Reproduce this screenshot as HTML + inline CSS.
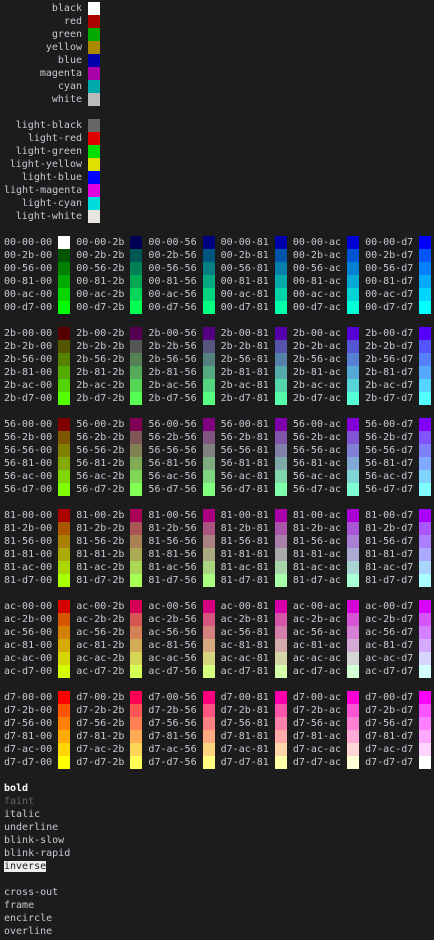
<!DOCTYPE html>
<html><head><meta charset="utf-8"><style>
html,body{margin:0;padding:0;background:#1c1c1c;}
body{width:434px;height:940px;overflow:hidden;padding:2px 0 0 4px;box-sizing:border-box;font-family:"DejaVu Sans Mono","Liberation Mono",monospace;font-size:10px;color:#c8c8d4;}
div{height:13px;line-height:13px;white-space:pre;}
i{display:inline-block;width:12px;height:13px;vertical-align:top;}
.n{display:inline-block;width:78px;text-align:right;}
</style></head><body>
<div><span class="n">black</span> <i style="background:#fff"></i></div>
<div><span class="n">red</span> <i style="background:#aa0000"></i></div>
<div><span class="n">green</span> <i style="background:#00aa00"></i></div>
<div><span class="n">yellow</span> <i style="background:#aa8800"></i></div>
<div><span class="n">blue</span> <i style="background:#0000aa"></i></div>
<div><span class="n">magenta</span> <i style="background:#aa00aa"></i></div>
<div><span class="n">cyan</span> <i style="background:#00aaaa"></i></div>
<div><span class="n">white</span> <i style="background:#bbbbbb"></i></div>
<div></div>
<div><span class="n">light-black</span> <i style="background:#666666"></i></div>
<div><span class="n">light-red</span> <i style="background:#e00000"></i></div>
<div><span class="n">light-green</span> <i style="background:#00dd00"></i></div>
<div><span class="n">light-yellow</span> <i style="background:#e0e000"></i></div>
<div><span class="n">light-blue</span> <i style="background:#0000ff"></i></div>
<div><span class="n">light-magenta</span> <i style="background:#e000e0"></i></div>
<div><span class="n">light-cyan</span> <i style="background:#00dddd"></i></div>
<div><span class="n">light-white</span> <i style="background:#e8e4e0"></i></div>
<div></div>
<div>00-00-00 <i style="background:#ffffff"></i> 00-00-2b <i style="background:#000055"></i> 00-00-56 <i style="background:#000080"></i> 00-00-81 <i style="background:#0000aa"></i> 00-00-ac <i style="background:#0000d5"></i> 00-00-d7 <i style="background:#0000ff"></i></div>
<div>00-2b-00 <i style="background:#005500"></i> 00-2b-2b <i style="background:#005555"></i> 00-2b-56 <i style="background:#005580"></i> 00-2b-81 <i style="background:#0055aa"></i> 00-2b-ac <i style="background:#0055d5"></i> 00-2b-d7 <i style="background:#0055ff"></i></div>
<div>00-56-00 <i style="background:#008000"></i> 00-56-2b <i style="background:#008055"></i> 00-56-56 <i style="background:#008080"></i> 00-56-81 <i style="background:#0080aa"></i> 00-56-ac <i style="background:#0080d5"></i> 00-56-d7 <i style="background:#0080ff"></i></div>
<div>00-81-00 <i style="background:#00aa00"></i> 00-81-2b <i style="background:#00aa55"></i> 00-81-56 <i style="background:#00aa80"></i> 00-81-81 <i style="background:#00aaaa"></i> 00-81-ac <i style="background:#00aad5"></i> 00-81-d7 <i style="background:#00aaff"></i></div>
<div>00-ac-00 <i style="background:#00d500"></i> 00-ac-2b <i style="background:#00d555"></i> 00-ac-56 <i style="background:#00d580"></i> 00-ac-81 <i style="background:#00d5aa"></i> 00-ac-ac <i style="background:#00d5d5"></i> 00-ac-d7 <i style="background:#00d5ff"></i></div>
<div>00-d7-00 <i style="background:#00ff00"></i> 00-d7-2b <i style="background:#00ff55"></i> 00-d7-56 <i style="background:#00ff80"></i> 00-d7-81 <i style="background:#00ffaa"></i> 00-d7-ac <i style="background:#00ffd5"></i> 00-d7-d7 <i style="background:#00ffff"></i></div>
<div></div>
<div>2b-00-00 <i style="background:#550000"></i> 2b-00-2b <i style="background:#550055"></i> 2b-00-56 <i style="background:#550080"></i> 2b-00-81 <i style="background:#5500aa"></i> 2b-00-ac <i style="background:#5500d5"></i> 2b-00-d7 <i style="background:#5500ff"></i></div>
<div>2b-2b-00 <i style="background:#555500"></i> 2b-2b-2b <i style="background:#555555"></i> 2b-2b-56 <i style="background:#555580"></i> 2b-2b-81 <i style="background:#5555aa"></i> 2b-2b-ac <i style="background:#5555d5"></i> 2b-2b-d7 <i style="background:#5555ff"></i></div>
<div>2b-56-00 <i style="background:#558000"></i> 2b-56-2b <i style="background:#558055"></i> 2b-56-56 <i style="background:#558080"></i> 2b-56-81 <i style="background:#5580aa"></i> 2b-56-ac <i style="background:#5580d5"></i> 2b-56-d7 <i style="background:#5580ff"></i></div>
<div>2b-81-00 <i style="background:#55aa00"></i> 2b-81-2b <i style="background:#55aa55"></i> 2b-81-56 <i style="background:#55aa80"></i> 2b-81-81 <i style="background:#55aaaa"></i> 2b-81-ac <i style="background:#55aad5"></i> 2b-81-d7 <i style="background:#55aaff"></i></div>
<div>2b-ac-00 <i style="background:#55d500"></i> 2b-ac-2b <i style="background:#55d555"></i> 2b-ac-56 <i style="background:#55d580"></i> 2b-ac-81 <i style="background:#55d5aa"></i> 2b-ac-ac <i style="background:#55d5d5"></i> 2b-ac-d7 <i style="background:#55d5ff"></i></div>
<div>2b-d7-00 <i style="background:#55ff00"></i> 2b-d7-2b <i style="background:#55ff55"></i> 2b-d7-56 <i style="background:#55ff80"></i> 2b-d7-81 <i style="background:#55ffaa"></i> 2b-d7-ac <i style="background:#55ffd5"></i> 2b-d7-d7 <i style="background:#55ffff"></i></div>
<div></div>
<div>56-00-00 <i style="background:#800000"></i> 56-00-2b <i style="background:#800055"></i> 56-00-56 <i style="background:#800080"></i> 56-00-81 <i style="background:#8000aa"></i> 56-00-ac <i style="background:#8000d5"></i> 56-00-d7 <i style="background:#8000ff"></i></div>
<div>56-2b-00 <i style="background:#805500"></i> 56-2b-2b <i style="background:#805555"></i> 56-2b-56 <i style="background:#805580"></i> 56-2b-81 <i style="background:#8055aa"></i> 56-2b-ac <i style="background:#8055d5"></i> 56-2b-d7 <i style="background:#8055ff"></i></div>
<div>56-56-00 <i style="background:#808000"></i> 56-56-2b <i style="background:#808055"></i> 56-56-56 <i style="background:#808080"></i> 56-56-81 <i style="background:#8080aa"></i> 56-56-ac <i style="background:#8080d5"></i> 56-56-d7 <i style="background:#8080ff"></i></div>
<div>56-81-00 <i style="background:#80aa00"></i> 56-81-2b <i style="background:#80aa55"></i> 56-81-56 <i style="background:#80aa80"></i> 56-81-81 <i style="background:#80aaaa"></i> 56-81-ac <i style="background:#80aad5"></i> 56-81-d7 <i style="background:#80aaff"></i></div>
<div>56-ac-00 <i style="background:#80d500"></i> 56-ac-2b <i style="background:#80d555"></i> 56-ac-56 <i style="background:#80d580"></i> 56-ac-81 <i style="background:#80d5aa"></i> 56-ac-ac <i style="background:#80d5d5"></i> 56-ac-d7 <i style="background:#80d5ff"></i></div>
<div>56-d7-00 <i style="background:#80ff00"></i> 56-d7-2b <i style="background:#80ff55"></i> 56-d7-56 <i style="background:#80ff80"></i> 56-d7-81 <i style="background:#80ffaa"></i> 56-d7-ac <i style="background:#80ffd5"></i> 56-d7-d7 <i style="background:#80ffff"></i></div>
<div></div>
<div>81-00-00 <i style="background:#aa0000"></i> 81-00-2b <i style="background:#aa0055"></i> 81-00-56 <i style="background:#aa0080"></i> 81-00-81 <i style="background:#aa00aa"></i> 81-00-ac <i style="background:#aa00d5"></i> 81-00-d7 <i style="background:#aa00ff"></i></div>
<div>81-2b-00 <i style="background:#aa5500"></i> 81-2b-2b <i style="background:#aa5555"></i> 81-2b-56 <i style="background:#aa5580"></i> 81-2b-81 <i style="background:#aa55aa"></i> 81-2b-ac <i style="background:#aa55d5"></i> 81-2b-d7 <i style="background:#aa55ff"></i></div>
<div>81-56-00 <i style="background:#aa8000"></i> 81-56-2b <i style="background:#aa8055"></i> 81-56-56 <i style="background:#aa8080"></i> 81-56-81 <i style="background:#aa80aa"></i> 81-56-ac <i style="background:#aa80d5"></i> 81-56-d7 <i style="background:#aa80ff"></i></div>
<div>81-81-00 <i style="background:#aaaa00"></i> 81-81-2b <i style="background:#aaaa55"></i> 81-81-56 <i style="background:#aaaa80"></i> 81-81-81 <i style="background:#aaaaaa"></i> 81-81-ac <i style="background:#aaaad5"></i> 81-81-d7 <i style="background:#aaaaff"></i></div>
<div>81-ac-00 <i style="background:#aad500"></i> 81-ac-2b <i style="background:#aad555"></i> 81-ac-56 <i style="background:#aad580"></i> 81-ac-81 <i style="background:#aad5aa"></i> 81-ac-ac <i style="background:#aad5d5"></i> 81-ac-d7 <i style="background:#aad5ff"></i></div>
<div>81-d7-00 <i style="background:#aaff00"></i> 81-d7-2b <i style="background:#aaff55"></i> 81-d7-56 <i style="background:#aaff80"></i> 81-d7-81 <i style="background:#aaffaa"></i> 81-d7-ac <i style="background:#aaffd5"></i> 81-d7-d7 <i style="background:#aaffff"></i></div>
<div></div>
<div>ac-00-00 <i style="background:#d50000"></i> ac-00-2b <i style="background:#d50055"></i> ac-00-56 <i style="background:#d50080"></i> ac-00-81 <i style="background:#d500aa"></i> ac-00-ac <i style="background:#d500d5"></i> ac-00-d7 <i style="background:#d500ff"></i></div>
<div>ac-2b-00 <i style="background:#d55500"></i> ac-2b-2b <i style="background:#d55555"></i> ac-2b-56 <i style="background:#d55580"></i> ac-2b-81 <i style="background:#d555aa"></i> ac-2b-ac <i style="background:#d555d5"></i> ac-2b-d7 <i style="background:#d555ff"></i></div>
<div>ac-56-00 <i style="background:#d58000"></i> ac-56-2b <i style="background:#d58055"></i> ac-56-56 <i style="background:#d58080"></i> ac-56-81 <i style="background:#d580aa"></i> ac-56-ac <i style="background:#d580d5"></i> ac-56-d7 <i style="background:#d580ff"></i></div>
<div>ac-81-00 <i style="background:#d5aa00"></i> ac-81-2b <i style="background:#d5aa55"></i> ac-81-56 <i style="background:#d5aa80"></i> ac-81-81 <i style="background:#d5aaaa"></i> ac-81-ac <i style="background:#d5aad5"></i> ac-81-d7 <i style="background:#d5aaff"></i></div>
<div>ac-ac-00 <i style="background:#d5d500"></i> ac-ac-2b <i style="background:#d5d555"></i> ac-ac-56 <i style="background:#d5d580"></i> ac-ac-81 <i style="background:#d5d5aa"></i> ac-ac-ac <i style="background:#d5d5d5"></i> ac-ac-d7 <i style="background:#d5d5ff"></i></div>
<div>ac-d7-00 <i style="background:#d5ff00"></i> ac-d7-2b <i style="background:#d5ff55"></i> ac-d7-56 <i style="background:#d5ff80"></i> ac-d7-81 <i style="background:#d5ffaa"></i> ac-d7-ac <i style="background:#d5ffd5"></i> ac-d7-d7 <i style="background:#d5ffff"></i></div>
<div></div>
<div>d7-00-00 <i style="background:#ff0000"></i> d7-00-2b <i style="background:#ff0055"></i> d7-00-56 <i style="background:#ff0080"></i> d7-00-81 <i style="background:#ff00aa"></i> d7-00-ac <i style="background:#ff00d5"></i> d7-00-d7 <i style="background:#ff00ff"></i></div>
<div>d7-2b-00 <i style="background:#ff5500"></i> d7-2b-2b <i style="background:#ff5555"></i> d7-2b-56 <i style="background:#ff5580"></i> d7-2b-81 <i style="background:#ff55aa"></i> d7-2b-ac <i style="background:#ff55d5"></i> d7-2b-d7 <i style="background:#ff55ff"></i></div>
<div>d7-56-00 <i style="background:#ff8000"></i> d7-56-2b <i style="background:#ff8055"></i> d7-56-56 <i style="background:#ff8080"></i> d7-56-81 <i style="background:#ff80aa"></i> d7-56-ac <i style="background:#ff80d5"></i> d7-56-d7 <i style="background:#ff80ff"></i></div>
<div>d7-81-00 <i style="background:#ffaa00"></i> d7-81-2b <i style="background:#ffaa55"></i> d7-81-56 <i style="background:#ffaa80"></i> d7-81-81 <i style="background:#ffaaaa"></i> d7-81-ac <i style="background:#ffaad5"></i> d7-81-d7 <i style="background:#ffaaff"></i></div>
<div>d7-ac-00 <i style="background:#ffd500"></i> d7-ac-2b <i style="background:#ffd555"></i> d7-ac-56 <i style="background:#ffd580"></i> d7-ac-81 <i style="background:#ffd5aa"></i> d7-ac-ac <i style="background:#ffd5d5"></i> d7-ac-d7 <i style="background:#ffd5ff"></i></div>
<div>d7-d7-00 <i style="background:#ffff00"></i> d7-d7-2b <i style="background:#ffff55"></i> d7-d7-56 <i style="background:#ffff80"></i> d7-d7-81 <i style="background:#ffffaa"></i> d7-d7-ac <i style="background:#ffffd5"></i> d7-d7-d7 <i style="background:#ffffff"></i></div>
<div></div>
<div style="font-weight:bold;color:#fff">bold</div>
<div style="color:#666">faint</div>
<div>italic</div>
<div>underline</div>
<div>blink-slow</div>
<div>blink-rapid</div>
<div><span style="background:#eeeeee;color:#1c1c1c">inverse</span></div>
<div></div>
<div>cross-out</div>
<div>frame</div>
<div>encircle</div>
<div>overline</div>
</body></html>
